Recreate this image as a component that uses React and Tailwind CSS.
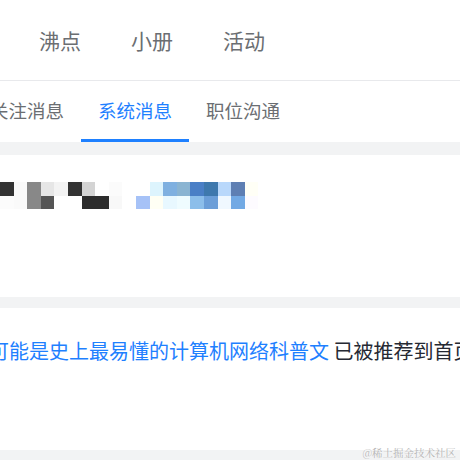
const topRow = [
  'bg-[#333333]', 'bg-[#fafafa]', 'bg-[#888888]', 'bg-[#e6e6e6]', 'bg-[#f3f3f3]',
  'bg-[#333333]', 'bg-[#d4d4d4]', 'bg-[#ffffff]', 'bg-[#fbfbfb]', 'bg-[#ffffff]',
  'bg-[#ffffff]', 'bg-[#ddf4fd]', 'bg-[#7fb0e0]', 'bg-[#8ab4d2]', 'bg-[#4a7fc6]',
  'bg-[#3e78ad]', 'bg-[#b9d8fb]', 'bg-[#5e7fb3]', 'bg-[#fffff6]',
]

const bottomRow = [
  'bg-[#fcfcfc]', 'bg-[#fafafa]', 'bg-[#888888]', 'bg-[#555555]', 'bg-[#ffffff]',
  'bg-[#ffffff]', 'bg-[#2d2d2d]', 'bg-[#2d2d2d]', 'bg-[#f8f8f8]', 'bg-[#ffffff]',
  'bg-[#a6c2f7]', 'bg-[#fffff4]', 'bg-[#e8f8ff]', 'bg-[#effcff]', 'bg-[#8cbeea]',
  'bg-[#6b9ed8]', 'bg-[#f0f8ff]', 'bg-[#72a9e4]', 'bg-[#fdfbff]',
]

const navItems = ['沸点', '小册', '活动']
const tabs = ['关注消息', '系统消息', '职位沟通']

const Mosaic = () => (
  <div className="flex flex-col">
    {[topRow, bottomRow].map((row, i) => (
      <div key={i} className="flex">
        {row.map((cls, j) => (
          <div key={j} className={`w-[13.6px] h-[13.6px] ${cls}`} />
        ))}
      </div>
    ))}
  </div>
)

const App = () => {
  return (
    <div
      className="relative w-[460px] h-[460px] overflow-hidden bg-[#f2f3f4]"
      style={{ fontFamily: '"Noto Sans CJK SC", "Noto Sans", sans-serif' }}
    >
      <div className="h-[81px] bg-white border-b border-[#e8e9ec] flex items-center pl-[39px] gap-[50px]">
        {navItems.map((item) => (
          <span key={item} className="text-[21px] leading-none text-[#6b6e72]">
            {item}
          </span>
        ))}
      </div>

      <div className="h-[61px] bg-white flex ml-[-27px]">
        {tabs.map((tab, i) => (
          <div
            key={tab}
            className={`w-[108px] shrink-0 flex items-center justify-center text-[18.5px] border-b-[3px] pt-[2px] ${
              i === 1 ? 'text-[#1e80ff] border-[#1e80ff]' : 'text-[#6b6e72] border-transparent'
            }`}
          >
            {tab}
          </div>
        ))}
      </div>

      <div className="mt-[13px] h-[142px] bg-white pt-[27px]">
        <Mosaic />
      </div>

      <div className="mt-[11px] h-[142px] bg-white pt-[30px]">
        <p className="ml-[-11px] whitespace-nowrap text-[20px] leading-[26px] text-[#252933]">
          <span className="text-[#1e80ff]">可能是史上最易懂的计算机网络科普文</span> 已被推荐到首页
        </p>
      </div>

      <span
        className="absolute right-[4px] bottom-[2px] text-[10.5px] leading-none text-[#b4b4b4] [text-shadow:0_0_2px_#fff]"
        style={{ fontFamily: '"Noto Serif CJK SC", "Noto Sans CJK SC", serif' }}
      >
        @稀土掘金技术社区
      </span>
    </div>
  )
}

export default App
